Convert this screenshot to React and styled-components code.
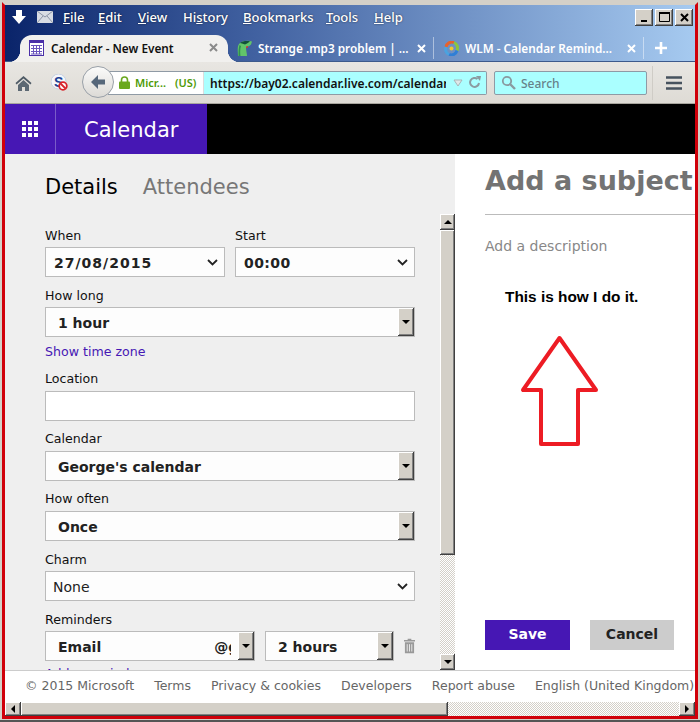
import React from 'react';
import styled, { createGlobalStyle } from 'styled-components';

const UI_FONT = `"DejaVu Sans", Verdana, sans-serif`;
const CHROME_FONT = `"Noto Sans", Tahoma, sans-serif`;
const PURPLE = '#4617b4';
const FACE = '#d4d0c8';
const CHECKER = `repeating-conic-gradient(${FACE} 0 25%, #fff 0 50%) 0 0 / 2px 2px`;
const RAISED = `inset -1px -1px 0 #404040, inset 1px 1px 0 #fff, inset -2px -2px 0 #808080`;

const GlobalStyle = createGlobalStyle`
  html, body { margin: 0; padding: 0; background: #fff; }
  body { font-family: ${UI_FONT}; }
`;

const Frame = styled.div`
  width: 700px;
  height: 722px;
  box-sizing: border-box;
  padding: 2px 2px 1px;
  background: #d4d0c8;
  border-bottom: 2px solid #555;
  overflow: hidden;
`;

const Window = styled.div`
  height: 100%;
  box-sizing: border-box;
  border: 3px solid #d0000a;
  border-top-color: #d4d0c8;
  display: flex;
  flex-direction: column;
  overflow: hidden;
`;

const TitleArea = styled.div`
  height: 57px;
  flex: none;
  background: linear-gradient(90deg, #0a246a 0%, #3f5f9f 35%, #a6caf0 100%);
  border-bottom: 1px solid #3d5a8c;
  box-sizing: border-box;
  font-family: ${CHROME_FONT};
  color: #fff;
`;

const MenuRow = styled.div`
  height: 30px;
  box-sizing: border-box;
  padding: 0 0 6px 6px;
  display: flex;
  align-items: center;
`;

const AppIcons = styled.div`
  display: flex;
  align-items: center;
  gap: 10px;
  width: 52px;
`;

const MenuItem = styled.span`
  width: ${(p) => p.$w}px;
  font-size: 13px;
  font-weight: 500;
  text-shadow: 0 0 2px rgba(0, 0, 0, 0.6);
`;

const WindowButtons = styled.div`
  margin-left: auto;
  margin-right: 2px;
  display: flex;
  gap: 2px;
`;

const WindowButton = styled.div`
  width: 18px;
  height: 17px;
  background: ${FACE};
  box-shadow: ${RAISED};
  display: flex;
  align-items: center;
  justify-content: center;
`;

const TabRow = styled.div`
  height: 27px;
  display: flex;
  align-items: stretch;
  padding-left: 15px;
`;

const ActiveTab = styled.div`
  position: relative;
  width: 208px;
  box-sizing: border-box;
  padding: 0 10px 2px 9px;
  background: #f1f0ee;
  border-radius: 12px 12px 0 0;
  display: flex;
  align-items: center;
  color: #111;
  &::before,
  &::after {
    content: '';
    position: absolute;
    bottom: 0;
    width: 12px;
    height: 12px;
  }
  &::before {
    left: -12px;
    background: radial-gradient(circle at 0 0, transparent 12px, #f1f0ee 12.5px);
  }
  &::after {
    right: -12px;
    background: radial-gradient(circle at 100% 0, transparent 12px, #f1f0ee 12.5px);
  }
`;

const Tab = styled.div`
  width: ${(p) => p.$w}px;
  margin: 2px 0 3px ${(p) => p.$ml || 0}px;
  box-sizing: border-box;
  display: flex;
  align-items: center;
  padding: 0 7px 0 ${(p) => p.$pl || 0}px;
  border-right: ${(p) => (p.$plain ? 'none' : '1px solid rgba(255,255,255,0.45)')};
`;

const TabTitle = styled.span`
  margin-left: ${(p) => p.$ml}px;
  flex: 1;
  font-size: 11.8px;
  font-weight: 600;
  white-space: nowrap;
  overflow: hidden;
`;

const Toolbar = styled.div`
  height: 42px;
  flex: none;
  background: linear-gradient(#e8e6e2, #dedbd5);
  border-bottom: 1px solid #a8a59e;
  box-sizing: border-box;
  display: flex;
  align-items: center;
  font-family: ${CHROME_FONT};
`;

const ToolIcon = styled.div`
  width: ${(p) => p.$w}px;
  display: flex;
  justify-content: center;
  flex: none;
`;

const UrlBar = styled.div`
  position: relative;
  margin-left: 30px;
  width: 379px;
  height: 24px;
  flex: none;
  box-sizing: border-box;
  border: 1px solid #8f9aa5;
  border-left: none;
  border-radius: 0 2px 2px 0;
  background: #aaffff;
  display: flex;
  align-items: center;
`;

const BackCircle = styled.div`
  position: absolute;
  left: -26px;
  top: -6px;
  width: 32px;
  height: 32px;
  box-sizing: border-box;
  border: 1px solid #99a0a8;
  border-radius: 50%;
  background: linear-gradient(#fbfbfa, #dcdad6);
  display: flex;
  align-items: center;
  justify-content: center;
  z-index: 1;
`;

const Identity = styled.div`
  width: 96px;
  height: 100%;
  flex: none;
  box-sizing: border-box;
  padding-left: 11px;
  background: #fff;
  border-right: 1px solid #ddd;
  display: flex;
  align-items: center;
  gap: 5px;
  font-size: 11px;
  font-weight: 600;
  color: #4e9a06;
  white-space: nowrap;
`;

const IdentityName = styled.span`
  width: 35px;
`;

const UrlText = styled.span`
  flex: 1;
  min-width: 0;
  overflow: hidden;
  white-space: nowrap;
  padding: 2px 0 0 6px;
  font-size: 12px;
  font-weight: 600;
  color: #111;
`;

const UrlActions = styled.div`
  flex: none;
  display: flex;
  align-items: center;
  gap: 5px;
  padding: 0 5px 0 7px;
`;

const SearchBox = styled.div`
  margin-left: 7px;
  width: 153px;
  height: 24px;
  flex: none;
  box-sizing: border-box;
  border: 1px solid #8f9aa5;
  border-radius: 2px;
  background: #aaffff;
  display: flex;
  align-items: center;
  gap: 5px;
  padding-left: 6px;
  font-size: 12px;
  font-weight: 500;
  color: #66828a;
`;

const SearchLabel = styled.span`
  padding-top: 2px;
`;

const MenuButton = styled.div`
  margin-left: 5px;
  padding-left: 13px;
  height: 34px;
  border-left: 1px solid #cfccc6;
  display: flex;
  align-items: center;
`;

const AppHeader = styled.header`
  height: 50px;
  flex: none;
  background: #000;
  display: flex;
`;

const Waffle = styled.div`
  width: 50px;
  background: ${PURPLE};
  border-right: 1px solid #7a5cc8;
  display: grid;
  grid-template-columns: repeat(3, 4px);
  grid-auto-rows: 4px;
  gap: 2px;
  align-content: center;
  justify-content: center;
`;

const WaffleDot = styled.i`
  background: #fff;
`;

const AppName = styled.div`
  width: 151px;
  box-sizing: border-box;
  padding: 2px 0 0 28px;
  background: ${PURPLE};
  color: #fff;
  font-size: 21px;
  line-height: 48px;
`;

const Main = styled.main`
  flex: 1;
  min-height: 0;
  display: flex;
`;

const LeftPanel = styled.section`
  width: 450px;
  flex: none;
  background: #efefef;
  display: flex;
  flex-direction: column;
`;

const TabBar = styled.div`
  height: 60px;
  flex: none;
  box-sizing: border-box;
  padding: 20px 0 0 40px;
  display: flex;
  gap: 25px;
  font-size: 21px;
  line-height: 26px;
`;

const DetailTab = styled.span`
  color: ${(p) => (p.$active ? '#000' : '#777')};
`;

const PanelBody = styled.div`
  flex: 1;
  min-height: 0;
  display: flex;
`;

const Form = styled.form`
  flex: 1;
  min-width: 0;
  overflow: hidden;
  box-sizing: border-box;
  padding: 13px 25px 0 40px;
  display: flex;
  flex-direction: column;
  gap: 10px;
`;

const Row = styled.div`
  display: flex;
  align-items: center;
  gap: 10px;
`;

const Field = styled.div`
  flex: ${(p) => (p.$w ? `0 0 ${p.$w}px` : 1)};
  min-width: 0;
`;

const Label = styled.div`
  height: 16px;
  margin-bottom: 4px;
  font-size: 12.6px;
  line-height: ${(p) => (p.$tight ? 15 : 17)}px;
  color: #111;
`;

const Box = styled.div`
  height: 30px;
  box-sizing: border-box;
  border: 1px solid #bbb;
  background: ${(p) => (p.$white ? '#fff' : '#fdfdfd')};
  display: flex;
  align-items: center;
  padding-left: ${(p) => p.$pl || 0}px;
  font-size: 14px;
  font-weight: ${(p) => (p.$bold ? 700 : 400)};
  letter-spacing: ${(p) => p.$spacing || 0}px;
  color: #222;
  overflow: hidden;
  white-space: nowrap;
`;

const BoxText = styled.span`
  padding-top: 2px;
`;

const Chevron = styled.svg`
  margin-left: auto;
  margin-right: 6px;
  flex: none;
`;

const NativeArrow = styled.div`
  margin-left: auto;
  width: 16px;
  height: 28px;
  flex: none;
  background: ${FACE};
  box-shadow: ${RAISED};
  display: flex;
  align-items: center;
  justify-content: center;
  &::after {
    content: '';
    border: 4px solid transparent;
    border-top: 4px solid #000;
    border-bottom: none;
  }
`;

const EmailClip = styled.span`
  margin-left: 113px;
  padding-top: 2px;
  width: 17px;
  overflow: hidden;
`;

const TimeZoneLink = styled.a`
  display: block;
  height: 16px;
  margin: -4px 0 2px;
  font-size: 12.6px;
  line-height: 17px;
  color: ${PURPLE};
`;

const AddReminder = styled.a`
  display: block;
  margin-top: -5px;
  font-size: 12.6px;
  line-height: 16px;
  color: ${PURPLE};
`;

const VScroll = styled.div`
  width: 15px;
  flex: none;
  display: flex;
  flex-direction: column;
  background: ${CHECKER};
`;

const ScrollBtn = styled.div`
  flex: none;
  width: ${(p) => (p.$h ? '16px' : '15px')};
  height: ${(p) => (p.$h ? '14px' : '16px')};
  background: ${FACE};
  box-shadow: ${RAISED};
  display: flex;
  align-items: center;
  justify-content: center;
  &::after {
    content: '';
    width: 0;
    height: 0;
    border: 4px solid transparent;
    ${(p) => p.$dir === 'up' && 'border-bottom-color:#000;border-top:none;'}
    ${(p) => p.$dir === 'down' && 'border-top-color:#000;border-bottom:none;'}
    ${(p) => p.$dir === 'left' && 'border-right-color:#000;border-left:none;'}
    ${(p) => p.$dir === 'right' && 'border-left-color:#000;border-right:none;'}
  }
`;

const VThumb = styled.div`
  height: 325px;
  flex: none;
  background: ${FACE};
  box-shadow: ${RAISED};
`;

const Spring = styled.div`
  flex: 1;
`;

const RightPanel = styled.section`
  flex: 1;
  min-width: 0;
  box-sizing: border-box;
  padding: 8px 0 20px 30px;
  background: #fff;
  display: flex;
  flex-direction: column;
  overflow: hidden;
`;

const Subject = styled.div`
  height: 52px;
  flex: none;
  border-bottom: 1px solid #bbb;
  font-size: 27px;
  font-weight: 700;
  line-height: 38px;
  color: #737373;
  white-space: nowrap;
`;

const Description = styled.div`
  margin-top: 22px;
  font-size: 14px;
  line-height: 18px;
  color: #888;
`;

const Note = styled.p`
  margin: 33px 0 0 20px;
  font-family: "Liberation Sans", Arial, sans-serif;
  font-size: 15.4px;
  font-weight: 700;
  line-height: 18px;
  color: #000;
`;

const ArrowMark = styled.svg`
  display: block;
  margin: 29px 0 0 34px;
`;

const Actions = styled.div`
  margin-top: auto;
  display: flex;
  gap: 20px;
`;

const ActionButton = styled.button`
  width: ${(p) => (p.$primary ? 85 : 84)}px;
  height: 30px;
  padding: 0 0 3px;
  border: none;
  font-family: ${UI_FONT};
  font-size: 14px;
  font-weight: 700;
  background: ${(p) => (p.$primary ? PURPLE : '#ccc')};
  color: ${(p) => (p.$primary ? '#fff' : '#222')};
`;

const Footer = styled.footer`
  height: 32px;
  flex: none;
  box-sizing: border-box;
  border-top: 1px solid #ccc;
  background: #fff;
  display: flex;
  align-items: center;
  gap: 20px;
  padding: 0 0 3px 20px;
  font-size: 12.5px;
  color: #666;
  white-space: nowrap;
`;

const HScroll = styled.div`
  height: 14px;
  flex: none;
  display: flex;
  background: ${CHECKER};
  justify-content: space-between;
`;

const HThumb = styled.div`
  width: 427px;
  background: ${FACE};
  box-shadow: ${RAISED};
  margin-right: auto;
`;

const DownloadIcon = () => (
  <svg width="16" height="16" viewBox="0 0 16 16">
    <path d="M5 1h6v6h4l-7 8-7-8h4z" fill="#fff" />
  </svg>
);

const MailIcon = () => (
  <svg width="16" height="12" viewBox="0 0 16 12">
    <rect width="16" height="12" fill="#d8dce4" />
    <path d="M0 0l8 6 8-6M0 12l6-7M16 12l-6-7" stroke="#8a93a6" fill="none" />
  </svg>
);

const CalendarFavicon = () => (
  <svg width="16" height="16" viewBox="0 0 16 16">
    <rect x="0.5" y="0.5" width="14" height="15" fill="#fff" stroke="#4a2fa8" />
    <rect x="0" y="0" width="15" height="3" fill="#4a2fa8" />
    <path d="M2 5.5h11M2 8.5h11M2 11.5h11M2 14h11M4.5 5v9M7.5 5v9M10.5 5v9" stroke="#6a54bd" />
  </svg>
);

const GeckoFavicon = () => (
  <svg width="17" height="17" viewBox="0 0 17 17">
    <path d="M2 16C2 11 1 7 3 4c3-3 8-4 13-2.500l-1 3c-2 2-4 2-5 3 0 3 1 6 1 8.500z" fill="#62c46a" />
    <path d="M4 3c3-2 7-2.500 10-1.500l-3 2-2 1-3-1z" fill="#12513a" />
    <path d="M10 6.500l2-.5v1.500l-2 .5z" fill="#d8342c" />
    <path d="M2.500 16c0-4 0-8 1-11l1.500 1c-1 3-1 7-.5 10z" fill="#2f8f52" />
  </svg>
);

const SwirlFavicon = () => (
  <svg width="15" height="15" viewBox="0 0 15 15" fill="none" strokeWidth="3">
    <path d="M2 6a6 6 0 0 1 8-4.500" stroke="#e8622c" />
    <path d="M10 1.500a6 6 0 0 1 3 8" stroke="#8cc63f" />
    <path d="M13 9.500a6 6 0 0 1-8 4" stroke="#2f7fd6" />
    <path d="M5 13.500a6 6 0 0 1-3-7.500" stroke="#4aa3e0" />
    <circle cx="7.500" cy="7.500" r="2" fill="#f2c832" stroke="none" />
  </svg>
);

const CloseMark = ({ color }) => (
  <svg width="9" height="9" viewBox="0 0 9 9">
    <path d="M1 1l7 7M8 1L1 8" stroke={color} strokeWidth="2" />
  </svg>
);

const HomeIcon = () => (
  <svg width="17" height="16" viewBox="0 0 17 16">
    <path d="M8.500 1L0.500 8l1 1.500 7-6 7 6 1-1.500z" fill="#4f5b66" />
    <path d="M3 10l5.500-5 5.500 5v6h-4v-4H7v4H3z" fill="#5c6873" />
  </svg>
);

const BlockedS = () => (
  <svg width="17" height="17" viewBox="0 0 17 17">
    <circle cx="7.500" cy="7.500" r="7.500" fill="#f4f6fa" stroke="#c7d0e0" />
    <text x="3" y="12.500" fontFamily="Liberation Sans, sans-serif" fontSize="14" fontWeight="700" fill="#1b3f94">S</text>
    <circle cx="12" cy="12" r="3.800" fill="#fff" stroke="#d8232a" strokeWidth="1.800" />
    <path d="M9.500 9.500l5 5" stroke="#d8232a" strokeWidth="1.800" />
  </svg>
);

const BackArrow = () => (
  <svg width="16" height="14" viewBox="0 0 16 14">
    <path d="M8 0L1 7l7 7V9.500h7v-5H8z" fill="#56677a" />
  </svg>
);

const Padlock = () => (
  <svg width="11" height="13" viewBox="0 0 11 13">
    <path d="M2.500 6V4a3 3 0 0 1 6 0v2" stroke="#6aa81e" strokeWidth="1.600" fill="none" />
    <rect y="5.500" width="11" height="7.500" rx="1" fill="#6aa81e" />
  </svg>
);

const DropTriangle = () => (
  <svg width="10" height="8" viewBox="0 0 10 8">
    <path d="M1 1h8L5 7z" fill="#dfe8e8" stroke="#a9b5b8" />
  </svg>
);

const ReloadIcon = () => (
  <svg width="13" height="13" viewBox="0 0 13 13">
    <path d="M11 7a4.500 4.500 0 1 1-1.500-4" stroke="#8b9aa0" strokeWidth="2" fill="none" />
    <path d="M8 0l5 0-1 5z" fill="#8b9aa0" />
  </svg>
);

const SearchIcon = () => (
  <svg width="15" height="15" viewBox="0 0 15 15">
    <circle cx="6" cy="6" r="4.200" stroke="#8a9aa0" strokeWidth="1.800" fill="none" />
    <path d="M9 9l5 5" stroke="#8a9aa0" strokeWidth="2.400" />
  </svg>
);

const BurgerIcon = () => (
  <svg width="16" height="14" viewBox="0 0 16 14">
    <path d="M0 1.500h16M0 7h16M0 12.500h16" stroke="#46525e" strokeWidth="2.600" />
  </svg>
);

const ChevronDown = () => (
  <Chevron width="11" height="7" viewBox="0 0 11 7">
    <path d="M1 1l4.500 4.500L10 1" stroke="#222" strokeWidth="1.800" fill="none" />
  </Chevron>
);

const TrashIcon = () => (
  <svg width="12" height="16" viewBox="0 0 12 16">
    <path d="M4 0h4v1.500h4V3H0V1.500h4zM1 4h10v12H1z" fill="#999" />
    <path d="M3.500 6v8M6 6v8M8.500 6v8" stroke="#efefef" />
  </svg>
);

const MENU = [['F', 'ile', 35], ['E', 'dit', 40], ['V', 'iew', 45], ['Hi', 'story', 60], ['B', 'ookmarks', 83], ['T', 'ools', 48], ['H', 'elp', 40]];
const FOOTER_LINKS = ['© 2015 Microsoft', 'Terms', 'Privacy & cookies', 'Developers', 'Report abuse', 'English (United Kingdom)'];

const Select = ({ text, bold, pl, spacing }) => (
  <Box $bold={bold} $pl={pl} $spacing={spacing}>
    <BoxText>{text}</BoxText>
    <ChevronDown />
  </Box>
);

const NativeSelect = ({ text, pl = 12, children }) => (
  <Box $bold $pl={pl}>
    <BoxText>{text}</BoxText>
    {children}
    <NativeArrow />
  </Box>
);

const App = () => (
  <>
    <GlobalStyle />
    <Frame>
      <Window>
        <TitleArea>
          <MenuRow>
            <AppIcons>
              <DownloadIcon />
              <MailIcon />
            </AppIcons>
            {MENU.map(([key, rest, w]) => (
              <MenuItem key={rest} $w={w}>
                {key === 'Hi' ? (
                  <>
                    Hi<u>s</u>tory
                  </>
                ) : (
                  <>
                    <u>{key}</u>
                    {rest}
                  </>
                )}
              </MenuItem>
            ))}
            <WindowButtons>
              <WindowButton>
                <svg width="9" height="9" viewBox="0 0 9 9">
                  <path d="M1 8h6" stroke="#000" strokeWidth="2" />
                </svg>
              </WindowButton>
              <WindowButton>
                <svg width="11" height="10" viewBox="0 0 11 10">
                  <path d="M.5 1.500h10v8H.5z" stroke="#000" fill="none" />
                  <path d="M0 1h11" stroke="#000" strokeWidth="2" />
                </svg>
              </WindowButton>
              <WindowButton>
                <CloseMark color="#000" />
              </WindowButton>
            </WindowButtons>
          </MenuRow>
          <TabRow>
            <ActiveTab>
              <CalendarFavicon />
              <TabTitle $ml={6}>Calendar - New Event</TabTitle>
              <CloseMark color="#8a8a8a" />
            </ActiveTab>
            <Tab $w={198} $ml={8}>
              <GeckoFavicon />
              <TabTitle $ml={5}>Strange .mp3 problem | ...</TabTitle>
              <CloseMark color="#fff" />
            </Tab>
            <Tab $w={210} $pl={10}>
              <SwirlFavicon />
              <TabTitle $ml={6}>WLM - Calendar Remind...</TabTitle>
              <CloseMark color="#fff" />
            </Tab>
            <Tab $w={40} $pl={11} $plain>
              <svg width="12" height="12" viewBox="0 0 12 12">
                <path d="M6 0v12M0 6h12" stroke="#fff" strokeWidth="2.600" />
              </svg>
            </Tab>
          </TabRow>
        </TitleArea>

        <Toolbar>
          <ToolIcon $w={36}>
            <HomeIcon />
          </ToolIcon>
          <ToolIcon $w={37}>
            <BlockedS />
          </ToolIcon>
          <UrlBar>
            <BackCircle>
              <BackArrow />
            </BackCircle>
            <Identity>
              <Padlock />
              <IdentityName>Micr...</IdentityName>
              <span>(US)</span>
            </Identity>
            <UrlText>https://bay02.calendar.live.com/calendar</UrlText>
            <UrlActions>
              <DropTriangle />
              <ReloadIcon />
            </UrlActions>
          </UrlBar>
          <SearchBox>
            <SearchIcon />
            <SearchLabel>Search</SearchLabel>
          </SearchBox>
          <MenuButton>
            <BurgerIcon />
          </MenuButton>
        </Toolbar>

        <AppHeader>
          <Waffle>
            {Array.from({ length: 9 }, (_, i) => (
              <WaffleDot key={i} />
            ))}
          </Waffle>
          <AppName>Calendar</AppName>
        </AppHeader>

        <Main>
          <LeftPanel>
            <TabBar>
              <DetailTab $active>Details</DetailTab>
              <DetailTab>Attendees</DetailTab>
            </TabBar>
            <PanelBody>
              <Form>
                <Row>
                  <Field>
                    <Label>When</Label>
                    <Select text="27/08/2015" bold pl={8} spacing={1} />
                  </Field>
                  <Field>
                    <Label>Start</Label>
                    <Select text="00:00" bold pl={8} spacing={0.4} />
                  </Field>
                </Row>
                <Field>
                  <Label>How long</Label>
                  <NativeSelect text="1 hour" />
                </Field>
                <TimeZoneLink>Show time zone</TimeZoneLink>
                <Field>
                  <Label $tight>Location</Label>
                  <Box $white />
                </Field>
                <Field>
                  <Label $tight>Calendar</Label>
                  <NativeSelect text="George's calendar" />
                </Field>
                <Field>
                  <Label $tight>How often</Label>
                  <NativeSelect text="Once" />
                </Field>
                <Field>
                  <Label>Charm</Label>
                  <Select text="None" pl={7} />
                </Field>
                <Field>
                  <Label>Reminders</Label>
                  <Row>
                    <Field $w={210}>
                      <NativeSelect text="Email">
                        <EmailClip>@gmail.com</EmailClip>
                      </NativeSelect>
                    </Field>
                    <Field $w={129}>
                      <NativeSelect text="2 hours" />
                    </Field>
                    <TrashIcon />
                  </Row>
                </Field>
                <AddReminder>Add a reminder</AddReminder>
              </Form>
              <VScroll>
                <ScrollBtn $dir="up" />
                <VThumb />
                <Spring />
                <ScrollBtn $dir="down" />
              </VScroll>
            </PanelBody>
          </LeftPanel>

          <RightPanel>
            <Subject>Add a subject</Subject>
            <Description>Add a description</Description>
            <Note>This is how I do it.</Note>
            <ArrowMark width="80" height="112" viewBox="0 0 80 112">
              <path d="M40.500 3L4 55h18v54h37V55h18z" fill="none" stroke="#ed1c24" strokeWidth="4" strokeLinejoin="round" />
            </ArrowMark>
            <Actions>
              <ActionButton $primary>Save</ActionButton>
              <ActionButton>Cancel</ActionButton>
            </Actions>
          </RightPanel>
        </Main>

        <Footer>
          {FOOTER_LINKS.map((link) => (
            <span key={link}>{link}</span>
          ))}
        </Footer>
        <HScroll>
          <ScrollBtn $h $dir="left" />
          <HThumb />
          <ScrollBtn $h $dir="right" />
        </HScroll>
      </Window>
    </Frame>
  </>
);

export default App;
